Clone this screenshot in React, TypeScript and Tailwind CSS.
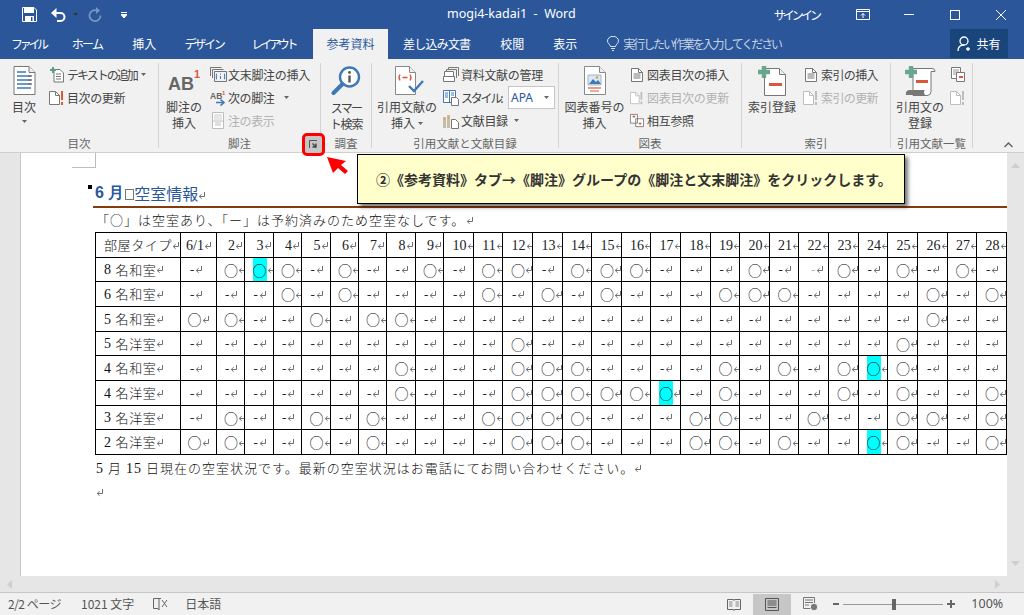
import React from 'react';

const Mark = ({ className = '' }: { className?: string }) => (
  <svg width="8" height="9" viewBox="0 0 8 9" className={`shrink-0 ${className}`}>
    <path d="M6.5 1v4.500H1.500M3.700 3.200L1.200 5.500l2.500 2.300" fill="none" stroke="#707070" strokeWidth="1" />
  </svg>
);

const Caret = ({ className = '' }: { className?: string }) => (
  <svg width="5" height="3" viewBox="0 0 5 3" className={`shrink-0 ${className}`}>
    <path d="M0 0h5L2.5 3z" fill="#666" />
  </svg>
);

// ---- ribbon icons ----
const TocIcon = () => (
  <svg width="23" height="29" viewBox="0 0 23 29">
    <path d="M1 .5h15l6 6v22H1z" fill="#fff" stroke="#777" />
    <path d="M16 .5v6h6" fill="#eee" stroke="#777" />
    <path d="M4 6h9M4 10h14M4 14h14M4 18h14M4 22h14" stroke="#3f78b5" strokeWidth="1.4" />
    <path d="M15 10h4M15 14h4M15 18h4" stroke="#777" strokeWidth="1.4" />
  </svg>
);
const AddTextIcon = () => (
  <svg width="15" height="16" viewBox="0 0 15 16">
    <path d="M4 2.5h6l3.5 3.5v9H4z" fill="#fff" stroke="#777" />
    <path d="M6 7h5M6 9.5h5M6 12h5" stroke="#777" />
    <path d="M3 0v6M0 3h6" stroke="#5b9e83" strokeWidth="2" />
  </svg>
);
const UpdateIcon = ({ c = '#777', bang = '#d9593a' }: { c?: string; bang?: string }) => (
  <svg width="16" height="14" viewBox="0 0 16 14">
    <path d="M.5.5h6l4 4v9H.5z" fill="#fff" stroke={c} />
    <path d="M6.5.5v4h4" fill="none" stroke={c} />
    <path d="M13 0v9M13 11v3" stroke={bang} strokeWidth="2" />
  </svg>
);
const EndnoteIcon = () => (
  <svg width="17" height="15" viewBox="0 0 17 15">
    <path d="M.5 9V.5h11M2.5 11V2.5h11M4.5 14.5v-10h12v10z" fill="none" stroke="#777" />
    <path d="M7 7H6.4v5H7M14 7h.6v5H14" fill="none" stroke="#3f78b5" />
    <path d="M10.5 6.5v1M10.5 9v3" stroke="#3f78b5" />
  </svg>
);
const NextNoteIcon = () => (
  <svg width="17" height="16" viewBox="0 0 17 16">
    <text x="0" y="9" fontSize="8.5" fontWeight="700" fill="#666" fontFamily="Liberation Sans">AB</text>
    <text x="12" y="5" fontSize="6" fontWeight="700" fill="#d9593a" fontFamily="Liberation Sans">1</text>
    <path d="M6 12.5h7M10.5 9.5l3.5 3-3.5 3" fill="none" stroke="#3f78b5" strokeWidth="1.6" />
  </svg>
);
const ShowNoteIcon = () => (
  <svg width="12" height="17" viewBox="0 0 12 17">
    <path d="M.5.5h11v16H.5zM.5 9h11" fill="#fff" stroke="#bdbdbd" />
    <path d="M2 2h8v6H2z" fill="#e6e6e6" />
    <path d="M3 11h6M3 13h6" stroke="#bdbdbd" />
  </svg>
);
const MagnifierIcon = () => (
  <svg width="30" height="30" viewBox="0 0 30 30">
    <circle cx="18.5" cy="11" r="9.5" fill="#fff" stroke="#3f78b5" strokeWidth="2.4" />
    <path d="M11.5 18L2.5 27" stroke="#3f78b5" strokeWidth="4" strokeLinecap="round" />
    <path d="M18.5 9.5v7" stroke="#555" strokeWidth="2.4" />
    <circle cx="18.5" cy="6.5" r="1.4" fill="#555" />
  </svg>
);
const CiteIcon = () => (
  <svg width="30" height="29" viewBox="0 0 30 29">
    <path d="M.5.5h14l6 6v22H.5z" fill="#fff" stroke="#888" />
    <path d="M14.5.5v6h6" fill="#eee" stroke="#888" />
    <path d="M5 8.5q-2 3 0 6M15 8.5q2 3 0 6" fill="none" stroke="#d9593a" strokeWidth="1.3" />
    <path d="M7.5 11.5h5" stroke="#d9593a" strokeWidth="1.6" />
    <path d="M14 20l5 5 9-10" fill="none" stroke="#3f78b5" strokeWidth="2.4" />
  </svg>
);
const ManageIcon = () => (
  <svg width="16" height="15" viewBox="0 0 16 15">
    <path d="M5.5 3V.5h10V9M3.5 5V2.5h10V11" fill="none" stroke="#777" />
    <path d="M.5 14.5v-5h11v5zM1.5 9.5V4.500h9v5" fill="#fff" stroke="#777" />
  </svg>
);
const StyleIcon = () => (
  <svg width="16" height="16" viewBox="0 0 16 16">
    <path d="M.5.5h12v12H.5zM6.5.5v12" fill="#fff" stroke="#3f78b5" />
    <path d="M2 3h3M2 5h3M2 7h3M8 3h3M8 5h3" stroke="#3f78b5" />
    <path d="M8.5 7.5h5l2 2v6h-7z" fill="#fff" stroke="#777" />
  </svg>
);
const BiblioIcon = () => (
  <svg width="16" height="16" viewBox="0 0 16 16">
    <path d="M0 4h3v11H0zM4 2h3v13H4z" fill="#c6bda6" />
    <path d="M1 6h1M5 5h1" stroke="#e3a23a" strokeWidth="2" />
    <path d="M8.5 6.5h4l3 3v6h-7z" fill="#fff" stroke="#777" />
  </svg>
);
const CaptionIcon = () => (
  <svg width="22" height="29" viewBox="0 0 22 29">
    <path d="M.5.5h15l6 6v22H.5z" fill="#fff" stroke="#888" />
    <path d="M15.5.5v6h6" fill="#eee" stroke="#888" />
    <path d="M4 9h13v10H4z" fill="#dbe7f3" stroke="#9cb6d0" />
    <path d="M5 18l4-5 3 3 2-2 3 4z" fill="#3f78b5" />
    <circle cx="13" cy="11.5" r="1.3" fill="#e3a23a" />
    <path d="M4 22h13" stroke="#d9593a" strokeWidth="1.2" />
    <path d="M6 25h9" stroke="#d9593a" />
  </svg>
);
const TocSmallIcon = ({ c = '#777' }: { c?: string }) => (
  <svg width="12" height="14" viewBox="0 0 12 14">
    <path d="M.5.5h7l4 4v9H.5z" fill="#fff" stroke={c} />
    <path d="M7.5.5v4h4" fill="none" stroke={c} />
    <path d="M2.5 6h7M2.5 8h7M2.5 10h7" stroke={c} />
  </svg>
);
const CrossRefIcon = () => (
  <svg width="16" height="15" viewBox="0 0 16 15">
    <path d="M.5.5h8v10H.5zM6.5 5.5h9v9h-9z" fill="#fff" stroke="#777" />
    <path d="M3 3h3" stroke="#d9593a" strokeWidth="2" />
    <path d="M10 11h3" stroke="#d9593a" strokeWidth="2" />
  </svg>
);
const MarkEntryIcon = () => (
  <svg width="28" height="30" viewBox="0 0 28 30">
    <path d="M6.5 2.5h15l6 6v21h-21z" fill="#fff" stroke="#777" />
    <path d="M21.5 2.5v6h6" fill="#eee" stroke="#777" />
    <path d="M6 0v12M0 6h12" stroke="#6aa68d" strokeWidth="4.4" />
    <path d="M11 18.5h13" stroke="#d9593a" strokeWidth="3" />
  </svg>
);
const MarkCitationIcon = () => (
  <svg width="31" height="30" viewBox="0 0 31 30">
    <path d="M8 2.5h19q3 0 3 3h-4v20q0 4-4 4H8z" fill="#fff" stroke="#777" />
    <path d="M1 29q-1-4 3-5h16q-2 2 0 5z" fill="#777" />
    <path d="M6 0v12M0 6h12" stroke="#6aa68d" strokeWidth="4.4" />
    <path d="M11 15.5h12" stroke="#d9593a" strokeWidth="3" />
  </svg>
);
const TableAuthIcon = () => (
  <svg width="15" height="15" viewBox="0 0 15 15">
    <path d="M.5.5h9v11H.5z" fill="#fff" stroke="#777" />
    <path d="M2 3h6M2 5h6M2 7h4" stroke="#999" />
    <path d="M5.5 5.5h8v9h-8z" fill="#fff" stroke="#777" />
    <path d="M8 10h4" stroke="#d9593a" strokeWidth="2" />
  </svg>
);

// ---- ribbon parts ----
const Sep = () => <div className="w-px my-[4px] bg-[#d4d4d4] shrink-0" />;

const Group = ({ label, width, children }: { label: string; width: string; children: React.ReactNode }) => (
  <div className={`${width} shrink-0 flex flex-col`}>
    <div className="h-[75px] flex">{children}</div>
    <div className="h-[18px] text-center leading-[18px] text-[11.5px] text-[#666]">{label}</div>
  </div>
);

const Big = ({ icon, lines, width, caret, iconH = 'h-[36px]' }: { icon: React.ReactNode; lines: React.ReactNode[]; width: string; caret?: boolean; iconH?: string }) => (
  <div className={`${width} shrink-0 flex flex-col items-center pt-[7px]`}>
    <div className={`${iconH} flex items-start justify-center`}>{icon}</div>
    {lines.map((l, i) => (
      <div key={i} className="h-[16px] leading-[16px] text-[12px] text-[#444] whitespace-nowrap">{l}</div>
    ))}
    {caret && <Caret className="mt-[5px]" />}
  </div>
);

const Small = ({ icon, text, caret, off, tracking = '', iconBox = 'w-[18px]', gap = 'gap-[1px]' }: { icon: React.ReactNode; text: string; caret?: React.ReactNode; off?: boolean; tracking?: string; iconBox?: string; gap?: string }) => (
  <div className={`h-[23px] flex items-center whitespace-nowrap ${gap}`}>
    <div className={`${iconBox} flex justify-center shrink-0`}>{icon}</div>
    <span className={`text-[12px] ${tracking} ${off ? 'text-[#b1b1b1]' : 'text-[#444]'}`}>{text}</span>
    {caret}
  </div>
);

const Tab = ({ children, className = '' }: { children: React.ReactNode; className?: string }) => (
  <div className={`text-[12px] leading-[30px] whitespace-nowrap text-white ${className}`}>{children}</div>
);

// ---- table ----
const days = ['6/1', ...Array.from({ length: 27 }, (_, i) => String(i + 2))];
const colW = [
  'w-[85px]', 'w-[36px]', 'w-[28px]', 'w-[29px]', 'w-[28px]', 'w-[29px]', 'w-[28px]', 'w-[28px]', 'w-[29px]', 'w-[28px]',
  'w-[30px]', 'w-[29px]', 'w-[30px]', 'w-[30px]', 'w-[29px]', 'w-[30px]', 'w-[29px]', 'w-[30px]', 'w-[30px]', 'w-[29px]',
  'w-[30px]', 'w-[29px]', 'w-[30px]', 'w-[30px]', 'w-[29px]', 'w-[30px]', 'w-[30px]', 'w-[29px]', 'w-[30px]',
];
const rows: { name: [string, string]; cells: string; h: string }[] = [
  { name: ['8', '名和室'], cells: '-O*O-O--O-OO-OOO---O-_O-O-O-', h: 'h-[23px]' },
  { name: ['6', '名和室'], cells: '---O-O----O-O-O---OOO----O-O', h: 'h-[24px]' },
  { name: ['5', '名和室'], cells: 'OO--O-OO-----------------O--', h: 'h-[24px]' },
  { name: ['5', '名洋室'], cells: '-----------O------------O---', h: 'h-[23px]' },
  { name: ['4', '名和室'], cells: '-------O---OOO----O-O-O*O---', h: 'h-[24px]' },
  { name: ['4', '名洋室'], cells: '-------O---OOOOO*-O---O-O--O', h: 'h-[24px]' },
  { name: ['3', '名洋室'], cells: '-O--O-O---OOOO---OO--O--OO-O', h: 'h-[23px]' },
  { name: ['2', '名洋室'], cells: 'OO--O-O----OOO---OO-O--*O--O', h: 'h-[24px]' },
];

const Cell = ({ v, h, first }: { v: string; h: string; first: boolean }) => {
  if (v === '-' || v === '_') {
    return (
      <div className={`${h} flex items-center justify-center overflow-hidden ${first ? 'pr-[6px]' : ''} ${v === '_' ? 'pl-[8px]' : 'pl-[2px]'}`}>
        <span className={`font-['Liberation_Serif'] text-[13px] leading-none w-[5px] ${v === '_' ? 'text-[#bbb]' : 'text-[#222]'}`}>-</span>
        <Mark />
      </div>
    );
  }
  return (
    <div className={`${h} flex items-center justify-center overflow-hidden ${first ? '' : 'pl-px'}`}>
      <span className={`${h} w-[14px] text-center text-[14px] leading-[24px] font-light text-black ${v === '*' ? 'bg-[#00ffff]' : ''}`}>○</span>
      <Mark className={first ? '' : '-mr-[8px]'} />
    </div>
  );
};

export default function App() {
  return (
    <div className="w-[1024px] h-[615px] overflow-hidden relative flex flex-col bg-[#e6e6e6] font-['Noto_Sans_CJK_JP','Noto_Sans',sans-serif]">
      {/* title bar */}
      <div className="h-[29px] bg-[#2b579a] flex items-center shrink-0 text-white">
        <svg width="15" height="15" viewBox="0 0 15 15" className="ml-[22px]">
          <path d="M.5.5h11.500l2.500 2.500v11.500H.5z" fill="none" stroke="#fff" />
          <path d="M2 0h10v6H2zM3 9h9v6H3z" fill="#fff" />
          <path d="M9 10h1.500v4H9z" fill="#2b579a" />
        </svg>
        <svg width="16" height="14" viewBox="0 0 16 14" className="ml-[14px]">
          <path d="M1 5h8.500a4 4 0 0 1 0 8H6" fill="none" stroke="#fff" strokeWidth="2" />
          <path d="M5.500 0v10L0 5z" fill="#fff" />
        </svg>
        <Caret className="ml-[6px] invert brightness-200" />
        <svg width="14" height="15" viewBox="0 0 14 15" className="ml-[10px]">
          <path d="M9 3.500a5.500 5.500 0 1 0 3.500 5" fill="none" stroke="#7795c2" strokeWidth="1.800" />
          <path d="M8 0v7l4-3.500z" fill="#7795c2" />
        </svg>
        <svg width="6" height="6" viewBox="0 0 6 6" className="ml-[19px]">
          <path d="M0 .5h6M0 2.500h6L3 6z" stroke="#fff" fill="#fff" strokeWidth="1" />
        </svg>
        <div className="w-[320px] shrink-0" />
        <span className="font-['Noto_Sans'] text-[12.500px] whitespace-pre">mogi4-kadai1  -  Word</span>
        <span className="ml-[198px] text-[12px] tracking-[-2.900px] whitespace-nowrap w-[46px]">サインイン</span>
        <svg width="14" height="11" viewBox="0 0 14 11" className="ml-[36px]">
          <path d="M.5.5h13v10H.5zM.5 2.500h13" fill="none" stroke="#fff" />
          <path d="M7 9V4.500M5 6.500l2-2 2 2" fill="none" stroke="#fff" />
        </svg>
        <div className="ml-[34px] w-[10px] h-px bg-white" />
        <div className="ml-[36px] w-[10px] h-[10px] border border-white" />
        <svg width="10" height="10" viewBox="0 0 10 10" className="ml-[36px]">
          <path d="M0 0l10 10M10 0L0 10" stroke="#fff" strokeWidth="1" />
        </svg>
      </div>

      {/* tabs */}
      <div className="h-[30px] bg-[#2b579a] flex shrink-0">
        <Tab className="ml-[11px] tracking-[-3.300px]">ファイル</Tab>
        <Tab className="ml-[26px] tracking-[-1.700px]">ホーム</Tab>
        <Tab className="ml-[30px]">挿入</Tab>
        <Tab className="ml-[28px] tracking-[-2.200px]">デザイン</Tab>
        <Tab className="ml-[28px] tracking-[-3.300px]">レイアウト</Tab>
        <div className="ml-[18px] w-[75px] bg-[#f1f1f1] text-center text-[12px] leading-[30px] text-[#2b579a]">参考資料</div>
        <Tab className="ml-[15px] tracking-[-0.800px]">差し込み文書</Tab>
        <Tab className="ml-[30px]">校閲</Tab>
        <Tab className="ml-[29px]">表示</Tab>
        <svg width="12" height="15" viewBox="0 0 12 15" className="ml-[30px] mt-[7px]">
          <path d="M3.500 10.500C3 8 .5 7.500.5 5a5.500 4.700 0 0 1 11 0c0 2.500-2.500 3-3 5.500zM4 12.500h4M5 14.500h2" fill="none" stroke="#dbe3ef" />
        </svg>
        <Tab className="ml-[4px] tracking-[-2.100px] !text-[#c4d1e4]">実行したい作業を入力してください</Tab>
        <div className="flex-1" />
        <div className="w-[58px] h-[29px] mr-[16px] bg-[#19457b] flex items-center justify-center gap-[3px] text-white">
          <svg width="16" height="16" viewBox="0 0 16 16">
            <circle cx="7" cy="5" r="4" fill="none" stroke="#fff" strokeWidth="1.300" />
            <path d="M1 15c0-4 2-6 6-6M11 11v4M9 13h4" fill="none" stroke="#fff" strokeWidth="1.300" />
          </svg>
          <span className="text-[12px]">共有</span>
        </div>
      </div>

      {/* ribbon */}
      <div className="h-[94px] bg-[#f1f1f1] border-b border-[#cfcfcf] flex shrink-0 relative">
        <Group label="目次" width="w-[158px]">
          <Big icon={<TocIcon />} lines={['目次']} width="w-[48px]" caret iconH="h-[33px]" />
          <div className="pt-[4px]">
            <Small icon={<AddTextIcon />} text="テキストの追加" tracking="tracking-[-2px]" caret={<Caret className="ml-[3px]" />} />
            <Small icon={<UpdateIcon />} text="目次の更新" tracking="tracking-[-0.400px]" />
          </div>
        </Group>
        <Sep />
        <Group label="脚注" width="w-[161px]">
          <Big
            icon={
              <div className="flex items-start font-['Liberation_Sans'] font-bold leading-none">
                <span className="text-[18px] text-[#666] mt-[9px]">AB</span>
                <span className="text-[11px] text-[#d9593a] mt-[3px]">1</span>
              </div>
            }
            lines={['脚注の', '挿入']}
            width="w-[50px]"
            iconH="h-[33px]"
          />
          <div className="pt-[4px]">
            <Small icon={<EndnoteIcon />} text="文末脚注の挿入" tracking="tracking-[-0.300px]" />
            <Small icon={<NextNoteIcon />} text="次の脚注" tracking="tracking-[-0.400px]" caret={<Caret className="ml-[9px]" />} />
            <Small icon={<ShowNoteIcon />} text="注の表示" tracking="tracking-[-0.400px]" off />
          </div>
        </Group>
        <Sep />
        <Group label="調査" width="w-[50px]">
          <Big icon={<MagnifierIcon />} lines={[<span className="tracking-[-1.700px]">スマー</span>, <span className="tracking-[-1.200px]">ト検索</span>]} width="w-[50px]" iconH="h-[34px]" />
        </Group>
        <Sep />
        <Group label="引用文献と文献目録" width="w-[186px]">
          <Big
            icon={<div className="ml-[6px]"><CiteIcon /></div>}
            lines={['引用文献の', <span className="flex items-center gap-[3px]">挿入<Caret /></span>]}
            width="w-[70px]"
            iconH="h-[33px]"
          />
          <div className="pt-[4px]">
            <Small icon={<ManageIcon />} text="資料文献の管理" tracking="tracking-[-0.300px]" />
            <div className="h-[23px] flex items-center whitespace-nowrap gap-[1px]">
              <div className="w-[18px] flex justify-center shrink-0"><StyleIcon /></div>
              <span className="text-[12px] text-[#444] tracking-[-2.200px] w-[46px]">スタイル:</span>
              <div className="w-[47px] h-[23px] bg-white border border-[#c6c6c6] flex items-center justify-between pl-[2px] pr-[5px]">
                <span className="font-['Noto_Sans'] text-[12px] text-[#2b579a]">APA</span>
                <Caret />
              </div>
            </div>
            <Small icon={<BiblioIcon />} text="文献目録" tracking="tracking-[-0.300px]" caret={<Caret className="ml-[5px]" />} />
          </div>
        </Group>
        <Sep />
        <Group label="図表" width="w-[182px]">
          <Big icon={<CaptionIcon />} lines={['図表番号の', '挿入']} width="w-[71px]" iconH="h-[33px]" />
          <div className="pt-[4px]">
            <Small icon={<TocSmallIcon />} text="図表目次の挿入" tracking="tracking-[-0.300px]" iconBox="w-[14px]" gap="gap-[3px]" />
            <Small icon={<UpdateIcon c="#bdbdbd" bang="#bdbdbd" />} text="図表目次の更新" tracking="tracking-[-0.300px]" off iconBox="w-[14px]" gap="gap-[3px]" />
            <Small icon={<CrossRefIcon />} text="相互参照" tracking="tracking-[-0.300px]" iconBox="w-[14px]" gap="gap-[3px]" />
          </div>
        </Group>
        <Sep />
        <Group label="索引" width="w-[148px]">
          <Big icon={<MarkEntryIcon />} lines={['索引登録']} width="w-[60px]" iconH="h-[33px]" />
          <div className="pt-[4px]">
            <Small icon={<TocSmallIcon />} text="索引の挿入" tracking="tracking-[-0.600px]" />
            <Small icon={<UpdateIcon c="#bdbdbd" bang="#bdbdbd" />} text="索引の更新" tracking="tracking-[-0.600px]" off />
          </div>
        </Group>
        <Sep />
        <Group label="引用文献一覧" width="w-[81px]">
          <Big icon={<MarkCitationIcon />} lines={['引用文の', '登録']} width="w-[58px]" iconH="h-[33px]" />
          <div className="pt-[4px]">
            <Small icon={<TableAuthIcon />} text="" gap="gap-0" />
            <Small icon={<UpdateIcon c="#bdbdbd" bang="#bdbdbd" />} text="" gap="gap-0" />
          </div>
        </Group>
        <Sep />
        <svg width="9" height="6" viewBox="0 0 9 6" className="absolute right-[11px] bottom-[4px]">
          <path d="M.5 5l4-4 4 4" fill="none" stroke="#666" strokeWidth="1.500" />
        </svg>
      </div>

      {/* document */}
      <div className="h-[423px] flex shrink-0">
        <div className="w-[21px] shrink-0 border-r border-[#c6c6c6]" />
        <div className="w-[986px] shrink-0 bg-white pl-[74px] text-[#111]">
          <div className="-ml-[23px] w-[24px] h-[15px] border-r border-b border-[#bdbdbd]" />
          <div className="h-[38px] flex items-end -ml-[7px]">
            <div className="w-[4px] h-[4px] bg-black mr-[3px] mb-[17px]" />
            <span className="font-['Liberation_Sans'] text-[16px] leading-[24px] font-bold text-[#2b579a] mb-[1px]">6 月</span>
            <span className="w-[9px] h-[11px] border border-[#777] ml-px mb-[6px]" />
            <span className="text-[16px] leading-[24px] text-[#2b579a] mb-[1px]">空室情報</span>
            <Mark className="mb-[6px]" />
          </div>
          <div className="h-[2px] -ml-[2px] bg-[#843c0c]" />
          <div className="h-[24px] flex items-center text-[13px] font-light tracking-[1px] whitespace-nowrap pl-px">
            「○」は空室あり、「ー」は予約済みのため空室なしです。<Mark className="ml-[1px]" />
          </div>
          <table className="table-fixed border-collapse w-[911px] border border-black">
            <colgroup>
              {colW.map((c, i) => <col key={i} className={c} />)}
            </colgroup>
            <tbody>
              <tr>
                <td className="border border-black p-0">
                  <div className="h-[24px] flex items-center pl-[8px] text-[13px] font-light tracking-[0.600px] whitespace-nowrap">部屋タイプ<Mark /></div>
                </td>
                {days.map((d, i) => (
                  <td key={d} className="border border-black p-0">
                    <div className={`h-[24px] flex items-center justify-center overflow-hidden font-['Liberation_Serif'] text-[14px] text-[#222] ${i === 0 ? 'pl-[1px]' : 'pl-[2px]'}`}>
                      {d}<Mark className={i === 0 ? '' : '-mr-[8px]'} />
                    </div>
                  </td>
                ))}
              </tr>
              {rows.map(r => (
                <tr key={r.name.join('')}>
                  <td className="border border-black p-0">
                    <div className={`${r.h} flex items-center pl-[8px] text-[13px] font-light tracking-[0.600px] whitespace-nowrap`}>
                      <span className="font-['Liberation_Serif'] text-[14px] mr-[4px]">{r.name[0]}</span>{r.name[1]}<Mark />
                    </div>
                  </td>
                  {r.cells.split('').map((v, i) => (
                    <td key={i} className="border border-black p-0">
                      <Cell v={v} h={r.h} first={i === 0} />
                    </td>
                  ))}
                </tr>
              ))}
            </tbody>
          </table>
          <div className="h-[24px] mt-px flex items-center text-[13px] font-light tracking-[1px] whitespace-nowrap pl-px">
            <span className="font-['Liberation_Serif'] text-[14px] mr-[4px]">5</span>月<span className="font-['Liberation_Serif'] text-[14px] mx-[4px]">15</span>日現在の空室状況です。最新の空室状況はお電話にてお問い合わせください。<Mark />
          </div>
          <div className="h-[25px] flex items-center pl-px"><Mark /></div>
        </div>
        <div className="w-[17px] shrink-0 flex flex-col justify-between items-center py-[10px]">
          <svg width="9" height="5" viewBox="0 0 9 5"><path d="M4.500 0L9 5H0z" fill="#cfcfcf" /></svg>
          <svg width="9" height="5" viewBox="0 0 9 5"><path d="M4.500 5L9 0H0z" fill="#cfcfcf" /></svg>
        </div>
      </div>

      {/* horizontal scrollbar */}
      <div className="h-[17px] shrink-0 flex items-center justify-between px-[7px] border-b border-[#c6c6c6]">
        <svg width="5" height="9" viewBox="0 0 5 9"><path d="M0 4.500L5 0v9z" fill="#d0d0d0" /></svg>
        <svg width="5" height="9" viewBox="0 0 5 9" className="mr-[17px]"><path d="M5 4.500L0 0v9z" fill="#d0d0d0" /></svg>
      </div>

      {/* status bar */}
      <div className="flex-1 bg-[#f1f1f1] flex items-center text-[12px] text-[#555] whitespace-nowrap">
        <span className="ml-[8px] tracking-[-0.500px]">2/2 ページ</span>
        <span className="ml-[20px]">1021 文字</span>
        <svg width="15" height="14" viewBox="0 0 15 14" className="ml-[19px]">
          <path d="M6 1.500H.5v10H5L6 13V1.500M6 1.500h2" fill="none" stroke="#666" />
          <path d="M9 3l5 7M14 3l-5 7" stroke="#666" />
        </svg>
        <span className="ml-[17px]">日本語</span>
        <svg width="14" height="13" viewBox="0 0 14 13" className="ml-[506px]">
          <path d="M.5 1.500h6l.5 1 .5-1h6v10h-6L7 12.500l-.5-1h-6z" fill="none" stroke="#666" />
          <path d="M2 4h3.500M2 6h3.500M2 8h3.500M8.500 4H12M8.500 6H12M8.500 8H12" stroke="#888" />
        </svg>
        <div className="ml-[12px] w-[38px] h-[21px] bg-[#c6c6c6] flex items-center justify-center">
          <svg width="14" height="13" viewBox="0 0 14 13">
            <path d="M.5.500h13v12H.5z" fill="none" stroke="#555" />
            <path d="M2.500 3h9M2.500 5h9M2.500 7h9M2.500 9.500h9" stroke="#555" />
          </svg>
        </div>
        <svg width="15" height="14" viewBox="0 0 15 14" className="ml-[12px]">
          <path d="M.5.500h11v11H.5z" fill="none" stroke="#777" />
          <path d="M2 3h8M2 5.500h8M2 8h4" stroke="#777" />
          <circle cx="11" cy="10" r="3.700" fill="#777" stroke="#f1f1f1" />
        </svg>
        <div className="ml-[15px] w-[6px] h-[2px] bg-[#666]" />
        <div className="ml-[4px] w-[100px] h-px bg-[#999] relative">
          <div className="absolute left-[49px] -top-[5px] w-[4px] h-[11px] bg-[#666]" />
        </div>
        <svg width="8" height="8" viewBox="0 0 8 8" className="ml-[4px]"><path d="M4 0v8M0 4h8" stroke="#666" strokeWidth="2" /></svg>
        <span className="ml-[16px] font-['Noto_Sans'] text-[12.500px]">100%</span>
      </div>

      {/* annotations over the screenshot */}
      <div className="absolute left-[302px] top-[133px] w-[23px] h-[23px] rounded-[5px] border-[3px] border-[#ff0000] bg-[#c6c6c6] flex items-center justify-center">
        <svg width="9" height="9" viewBox="0 0 9 9">
          <path d="M.5 8V.5H8" fill="none" stroke="#555" />
          <path d="M3.500 3.500l3 3M7 3.500V7H3.500" fill="none" stroke="#444" strokeWidth="1.400" />
        </svg>
      </div>
      <svg width="24" height="20" viewBox="0 0 24 20" className="absolute left-[326px] top-[156px]">
        <path d="M1 1L20 5L15 9L22 15L19 18L12 12L7 17z" fill="#ff0000" />
      </svg>
      <div className="absolute left-[357px] top-[154px] w-[548px] h-[50px] bg-[#ffffcc] border border-black shadow-[3px_3px_4px_rgba(0,0,0,0.55)] flex items-center pl-[18px] text-[14px] font-bold text-[#333] whitespace-nowrap">
        ②《参考資料》タブ→《脚注》グループの《脚注と文末脚注》をクリックします。
      </div>
    </div>
  );
}
